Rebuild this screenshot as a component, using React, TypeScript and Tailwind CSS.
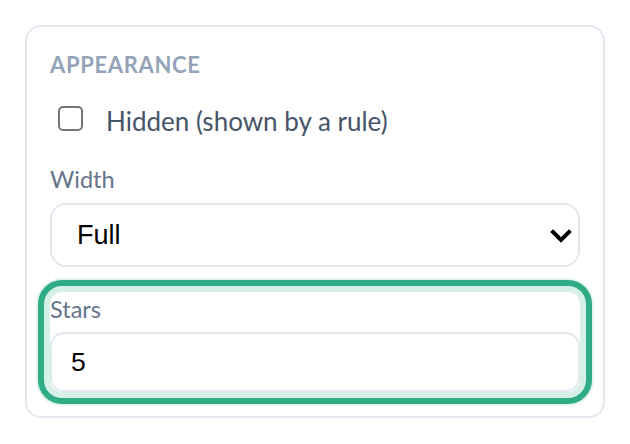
import React from "react";

export default function App() {
  return (
    <div className="min-h-[444px] w-[630px] bg-white pl-[25px] pt-[25px]" style={{ fontFamily: 'Lato, "Open Sans", sans-serif' }}>
      <div className="flex w-[580px] flex-col rounded-[16px] border-2 border-[#e2e8f0] bg-white px-[23px] pb-[24px] pt-[23px]">
        <div className="text-[22px] font-bold uppercase leading-[30px] tracking-[0.03em] text-[#94a3b8]">
          Appearance
        </div>
        <label className="mt-[21px] flex h-[40px] items-start">
          <span className="ml-[8px] mt-[5px] h-[25px] w-[25px] shrink-0 rounded-[5px] border-[2.5px] border-[#767676] bg-white" />
          <span className="ml-[23px] text-[26px] leading-[41px] text-[#475569]">Hidden (shown by a rule)</span>
        </label>
        <div className="mt-[21px] text-[23.5px] leading-[34px] text-[#64748b]">Width</div>
        <div className="relative mt-[7px]">
          <select
            defaultValue="Full"
            className="h-[64px] w-full appearance-none rounded-[16px] border-2 border-[#e2e8f0] bg-white pl-[25px] text-[27px] text-black outline-none"
            style={{ fontFamily: '"Liberation Sans", Arial, sans-serif' }}
          >
            <option>Full</option>
            <option>Half</option>
          </select>
          <svg
            className="pointer-events-none absolute right-[8px] top-[26px]"
            width="22"
            height="14"
            viewBox="0 0 22 14"
            fill="none"
          >
            <path d="M3 3 L11 11 L19 3" stroke="#000" strokeWidth="4" strokeLinecap="square" />
          </svg>
        </div>
        <div className="mt-[25px] flex flex-col rounded-[12px] bg-white shadow-[0_0_0_6px_#d6efe7,0_0_0_12px_#2fab86,0_0_0_14px_#e3f4ee]">
          <div className="text-[23.5px] leading-[34px] text-[#64748b]">Stars</div>
          <input
            defaultValue="5"
            className="mt-[6px] h-[60px] w-full rounded-[14px] border-2 border-[#e2e8f0] bg-white pl-[19px] text-[26.67px] text-black outline-none"
            style={{ fontFamily: '"Liberation Sans", Arial, sans-serif' }}
          />
        </div>
      </div>
    </div>
  );
}
